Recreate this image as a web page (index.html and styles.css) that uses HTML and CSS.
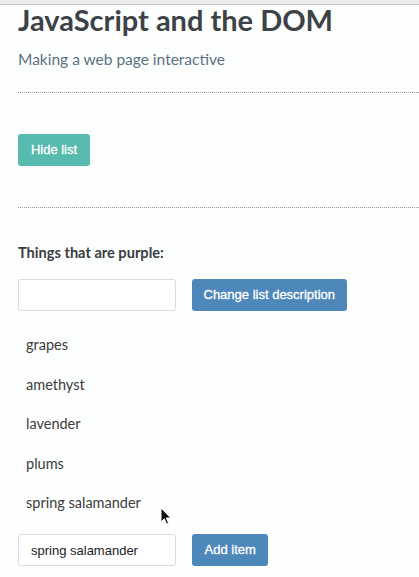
FILE: index.html
```html
<!DOCTYPE html>
<html lang="en">
<head>
<meta charset="utf-8">
<title>JavaScript and the DOM</title>
<link rel="stylesheet" href="styles.css">
</head>
<body>
<div class="topbar"></div>
<main class="page">
  <h1 class="title">JavaScript and the DOM</h1>
  <p class="subtitle">Making a web page interactive</p>
  <hr class="rule rule-first">
  <button class="btn btn-teal btn-hide">Hide list</button>
  <hr class="rule rule-second">
  <p class="list-desc">Things that are purple:</p>
  <div class="form-row">
    <input class="field" type="text" value="">
    <button class="btn btn-blue">Change list description</button>
  </div>
  <ul class="items">
    <li>grapes</li>
    <li>amethyst</li>
    <li>lavender</li>
    <li>plums</li>
    <li>spring salamander</li>
  </ul>
  <div class="form-row">
    <input class="field" type="text" value="spring salamander">
    <button class="btn btn-blue btn-add">Add item</button>
  </div>
</main>
<svg class="cursor" width="12" height="19" viewBox="0 0 12 19" xmlns="http://www.w3.org/2000/svg">
  <path d="M1 1 L1 15 L4.3 11.8 L6.6 17.2 L8.6 16.3 L6.4 11 L10.8 11 Z" fill="#111" stroke="#fff" stroke-width="1" stroke-linejoin="round"/>
</svg>
</body>
</html>
```

FILE: styles.css
```css
html, body {
  margin: 0;
  padding: 0;
  background: #fdfefe;
}

body {
  font-family: Lato, "Open Sans", sans-serif;
  color: #3c3c3c;
  position: relative;
  min-height: 577px;
  overflow: hidden;
}

.topbar {
  height: 4px;
  background: #ececec;
  border-bottom: 1px solid #c9c9c9;
}

.page {
  padding-left: 18px;
}

.title {
  margin: 1px 0 0;
  font-size: 29px;
  line-height: 28px;
  font-weight: 700;
  color: #3d4247;
  white-space: nowrap;
}

.subtitle {
  margin: 15px 0 0;
  font-size: 15.5px;
  line-height: 20px;
  color: #5b7282;
}

.rule {
  border: 0;
  border-top: 1px dotted #9a9a9a;
  height: 0;
  margin: 0;
}

.rule-first {
  margin-top: 23px;
}

.rule-second {
  margin-top: 41px;
}

.btn {
  display: inline-block;
  height: 32px;
  padding: 0 11.5px;
  border: 0;
  border-radius: 3px;
  color: #fff;
  font-family: "Liberation Sans", Arial, sans-serif;
  font-size: 13px;
  line-height: 32px;
  -webkit-text-stroke: 0.3px #fff;
  cursor: pointer;
}

.btn-teal {
  background: #58b9ae;
}

.btn-blue {
  background: #4e87ba;
}

.btn-add {
  padding: 0 12.5px;
}

.btn-hide {
  margin-top: 41px;
  width: 72px;
  padding: 0;
  display: block;
}

.list-desc {
  margin: 36px 0 0;
  font-size: 14.6px;
  line-height: 18px;
  font-weight: 700;
  color: #3a3d40;
}

.form-row {
  display: flex;
  gap: 16px;
  margin-top: 17px;
}

.field {
  box-sizing: border-box;
  width: 158px;
  height: 32px;
  margin: 0;
  padding: 0 12px;
  border: 1px solid #dcdcdc;
  border-radius: 3px;
  background: #fff;
  font-family: "Liberation Sans", Arial, sans-serif;
  font-size: 13px;
  color: #222;
}

.items {
  list-style: none;
  margin: 24px 0 0;
  padding: 0 0 0 8px;
  display: flex;
  flex-direction: column;
  gap: 19.5px;
}

.items li {
  font-size: 14.5px;
  line-height: 20px;
  color: #3c3c3c;
}

.items + .form-row {
  margin-top: 21px;
}

.cursor {
  position: absolute;
  left: 160px;
  top: 507px;
}
```
